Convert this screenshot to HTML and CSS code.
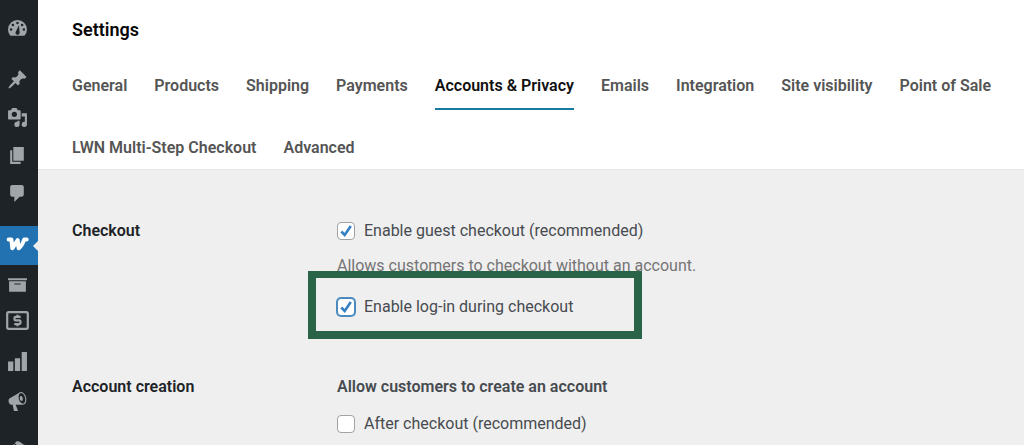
FILE: index.html
```html
<!DOCTYPE html>
<html lang="en">
<head>
<meta charset="utf-8">
<title>Settings</title>
<link rel="stylesheet" href="styles.css">
</head>
<body>
<div class="app">
  <nav class="sidebar" aria-label="Admin menu">
    <div class="menu-group menu-group-top">
      <a class="menu-item" href="#" aria-label="Dashboard"><svg class="icon" viewBox="0 0 20 20"><path fill-rule="evenodd" d="M3.400 17h13.200A9 9 0 0 0 19 11a9 9 0 0 0-18 0C1 13.500 1.900 15.500 3.400 17zM10 3.500a1.200 1.200 0 1 1 0 2.400A1.200 1.200 0 0 1 10 3.500zM5.600 5.400a1.200 1.200 0 1 1 0 2.400 1.200 1.200 0 0 1 0-2.400zM14.400 5.400a1.200 1.200 0 1 1 0 2.400 1.200 1.200 0 0 1 0-2.400zM3.900 9.800a1.200 1.200 0 1 1 0 2.400 1.200 1.200 0 0 1 0-2.400zM16.100 9.800a1.200 1.200 0 1 1 0 2.400 1.200 1.200 0 0 1 0-2.400zM11.400 7l.6 6.500a2 2 0 1 1-3.400-.9z"/></svg></a>
    </div>
    <div class="menu-group menu-group-content">
      <a class="menu-item" href="#" aria-label="Posts"><svg class="icon" viewBox="0 0 20 20"><path d="M10.440 3.020l1.820-1.820 6.360 6.350-1.830 1.820c-1.050-.68-2.480-.57-3.410.36l-.75.75c-.92.93-1.040 2.350-.35 3.410l-1.830 1.820-2.410-2.410-2.800 2.790c-.42.42-3.380 2.710-3.800 2.290s1.860-3.390 2.280-3.810l2.790-2.790L4.100 9.360l1.830-1.820c1.050.69 2.480.57 3.400-.36l.75-.75c.93-.92 1.050-2.350.36-3.410z"/></svg></a>
      <a class="menu-item" href="#" aria-label="Media"><svg class="icon" viewBox="0 0 20 20"><path fill-rule="evenodd" d="M13 11V4c0-.55-.45-1-1-1h-1.670L9 1H5L3.670 3H2c-.55 0-1 .45-1 1v7c0 .55.45 1 1 1h10c.55 0 1-.45 1-1zM7 4.500a2.500 2.500 0 1 1 0 5 2.500 2.500 0 0 1 0-5zM14 6h5v10.500a2.500 2.500 0 1 1-2-2.450V9h-3V6zm-4 8.050V13h2v3.500a2.500 2.500 0 1 1-2-2.450z"/></svg></a>
      <a class="menu-item" href="#" aria-label="Pages"><svg class="icon" viewBox="0 0 20 20"><path d="M6 15V2h10v13H6zm-1 1h8v2H3V5h2v11z"/></svg></a>
      <a class="menu-item" href="#" aria-label="Comments"><svg class="icon" viewBox="0 0 20 20"><path d="M5 2h9c1.100 0 2 .9 2 2v7c0 1.100-.9 2-2 2h-2l-5 5v-5H5c-1.100 0-2-.9-2-2V4c0-1.100.9-2 2-2z"/></svg></a>
    </div>
    <div class="menu-group menu-group-store">
      <a class="menu-item menu-item-current" href="#" aria-label="WooCommerce" aria-current="page"><svg class="icon icon-woo" viewBox="0 0 23 14"><path fill="none" stroke="#fff" stroke-width="4" stroke-linecap="round" stroke-linejoin="round" d="M2.600 2.400H5.400L6.300 11.300 11.700 3.200 12.600 11.300C15.800 9.500 17 6 18.300 2.400H20.700"/></svg></a>
      <a class="menu-item" href="#" aria-label="Products"><svg class="icon" viewBox="0 0 20 20"><path d="M19 4v2H1V4h18zM2 7h16v10H2V7zm11 3V9H7v1h6z"/></svg></a>
      <a class="menu-item" href="#" aria-label="Payments"><svg class="icon icon-money" viewBox="0 0 23 19"><rect x="1.200" y="1.200" width="20.600" height="16.600" rx="1.500" fill="none" stroke="currentColor" stroke-width="2.200"/><path fill="none" stroke="currentColor" stroke-width="2.200" d="M14.700 5.900H9.800Q8.500 5.900 8.500 7.100V8.200Q8.500 9.400 9.800 9.400H13.200Q14.500 9.400 14.500 10.600V11.800Q14.500 13.100 13.200 13.100H8.300M11.500 3.700V6M11.500 13V15.300"/></svg></a>
      <a class="menu-item" href="#" aria-label="Analytics"><svg class="icon" viewBox="0 0 20 20"><path d="M19 18V0h-5v18h5zm-6.500 0V6h-5v12h5zM6 18V9H1v9h5z"/></svg></a>
      <a class="menu-item" href="#" aria-label="Marketing"><svg class="icon" viewBox="0 0 20 20"><path fill-rule="evenodd" d="M18.150 5.940c.46 1.620.38 3.220-.02 4.480-.42 1.280-1.260 2.180-2.300 2.480-.16.06-.26.06-.4.06-.06.02-.12.02-.18.02-.06.02-.14.02-.22.02h-6.800l2.220 5.500c.02.14-.06.26-.14.34-.08.1-.24.16-.34.16H6.950c-.1 0-.26-.06-.34-.16-.08-.08-.16-.2-.14-.34l-1-5.500H4.250l-.02-.02c-.5.06-1.080-.18-1.540-.62s-.88-1.080-1.060-1.880c-.24-.8-.2-1.560-.02-2.200.18-.62.58-1.080 1.060-1.300l.02-.02 9-5.400c.1-.06.18-.1.24-.16.06-.04.14-.08.24-.12.16-.08.28-.12.5-.18 1.040-.3 2.240.1 3.220.98s1.840 2.240 2.260 3.860zm-2.580 5.980h-.02c.4-.1.74-.34 1.040-.7.58-.7.86-1.760.86-3.040 0-.64-.1-1.300-.28-1.980-.34-1.360-1.020-2.500-1.780-3.240s-1.680-1.100-2.460-.88c-.82.22-1.400.96-1.700 2-.32 1.040-.28 2.360.06 3.720.38 1.360 1 2.500 1.800 3.240.78.74 1.620 1.100 2.480.88zm-2.540-7.080c.22-.04.42-.02.62.04.38.16.76.48 1.020 1s.42 1.200.42 1.780c0 .3-.04.56-.12.8-.18.48-.44.84-.86.94-.34.1-.8-.06-1.140-.4s-.64-.86-.78-1.500c-.18-.62-.12-1.240.02-1.720s.48-.84.82-.94z"/></svg></a>
    </div>
    <div class="menu-group menu-group-site">
      <a class="menu-item" href="#" aria-label="Appearance"><svg class="icon" viewBox="0 0 20 20"><path d="M14.480 11.060L7.410 3.990l1.500-1.500c.5-.56 2.300-.47 3.510.32 1.210.8 1.430 1.280 2.910 2.100 1.180.64 2.450 1.260 4.450.85zm-.71.71L6.700 4.700 4.930 6.470c-.39.39-.39 1.020 0 1.410l1.060 1.060c.39.39.39 1.030 0 1.420-.6.6-1.430 1.110-2.210 1.690-.35.26-.7.53-1.010.84C1.430 14.230.4 16.080 1.400 17.070c.99 1 2.840-.03 4.180-1.360.31-.31.58-.66.85-1.020.57-.78 1.080-1.610 1.690-2.210.39-.39 1.020-.39 1.410 0l1.060 1.060c.39.39 1.020.39 1.410 0z"/></svg></a>
    </div>
  </nav>

  <main class="main">
    <header class="header">
      <h1 class="title">Settings</h1>
      <nav class="tabs" aria-label="Settings sections">
        <a class="tab" href="#">General</a>
        <a class="tab" href="#">Products</a>
        <a class="tab" href="#">Shipping</a>
        <a class="tab" href="#">Payments</a>
        <a class="tab tab-active" href="#" aria-current="page">Accounts &amp; Privacy</a>
        <a class="tab" href="#">Emails</a>
        <a class="tab" href="#">Integration</a>
        <a class="tab" href="#">Site visibility</a>
        <a class="tab" href="#">Point of Sale</a>
        <a class="tab" href="#">LWN Multi-Step Checkout</a>
        <a class="tab" href="#">Advanced</a>
      </nav>
    </header>

    <form class="settings">
      <section class="row">
        <h2 class="row-title">Checkout</h2>
        <div class="fields">
          <div class="option">
            <input class="checkbox" type="checkbox" id="guest" checked>
            <label for="guest">Enable guest checkout (recommended)</label>
          </div>
          <p class="description">Allows customers to checkout without an account.</p>
          <div class="option option-highlighted">
            <input class="checkbox checkbox-focused" type="checkbox" id="login" checked>
            <label for="login">Enable log-in during checkout</label>
          </div>
        </div>
      </section>
      <section class="row">
        <h2 class="row-title">Account creation</h2>
        <div class="fields">
          <h3 class="fields-title">Allow customers to create an account</h3>
          <div class="option">
            <input class="checkbox" type="checkbox" id="after">
            <label for="after">After checkout (recommended)</label>
          </div>
        </div>
      </section>
    </form>
  </main>
</div>
</body>
</html>
```
FILE: styles.css
```css
* { box-sizing: border-box; }

body {
  margin: 0;
  background: #efefef;
  color: #474b50;
  font-family: Roboto, "Liberation Sans", sans-serif;
  font-size: 16px;
  line-height: 24px;
}

h1, h2, h3, p { margin: 0; }

.app {
  display: flex;
  height: 100vh;
  overflow: hidden;
}

.sidebar {
  flex: none;
  width: 38px;
  padding-top: 9px;
  background: #1d2327;
}

.menu-group { display: grid; }
.menu-group-top { margin-bottom: 13px; }
.menu-group-content { margin-bottom: 14px; }
.menu-group-store { margin-bottom: 9px; }

.menu-item {
  display: flex;
  align-items: center;
  justify-content: center;
  height: 38px;
  padding-right: 4px;
  color: #a0a5aa;
}

.menu-group-content .menu-item { padding-top: 1px; }
.menu-group-store .menu-item { height: 39px; }

.menu-item-current {
  position: relative;
  background: #2271b1;
}

.menu-item-current::after {
  content: "";
  position: absolute;
  right: 0;
  top: 50%;
  margin-top: -5px;
  border: 5px solid transparent;
  border-left-width: 0;
  border-right-color: #efefef;
}

.icon {
  display: block;
  flex: none;
  width: 21px;
  height: 21px;
  fill: currentColor;
}

.icon-woo { width: 23px; height: 14px; margin-bottom: 4px; }
.icon-money { width: 23px; height: 19px; margin-bottom: 6px; }

.main {
  flex: 1;
  min-width: 0;
}

.header {
  padding: 18px 24px 9px 34px;
  background: #fff;
  border-bottom: 1px solid #e4e4e4;
}

.title {
  color: #070707;
  font-size: 18px;
  font-weight: 600;
  line-height: 24px;
}

.tabs {
  display: flex;
  flex-wrap: wrap;
  gap: 38px 27px;
  margin-top: 32px;
}

.tab {
  position: relative;
  color: #555;
  font-weight: 600;
  text-decoration: none;
}

.tab-active { color: #111; }

.tab-active::after {
  content: "";
  position: absolute;
  inset: auto 0 -12px;
  height: 2px;
  background: #187aa2;
}

.settings {
  display: grid;
  gap: 56px;
  padding: 49px 24px 24px 34px;
}

.row {
  display: grid;
  grid-template-columns: 265px 1fr;
}

.row-title {
  color: #1d2327;
  font-size: 16px;
  font-weight: 600;
  line-height: 24px;
}

.fields-title {
  margin-bottom: 13px;
  font-size: 16px;
  font-weight: 600;
  line-height: 24px;
}

.option {
  display: flex;
  align-items: center;
  gap: 9px;
  width: max-content;
}

.description {
  margin: 11px 0 17px;
  color: #757575;
}

.checkbox {
  appearance: none;
  flex: none;
  width: 18px;
  height: 18px;
  margin: 0;
  border: 1px solid #a0a2a5;
  border-radius: 4px;
  background: #fff center / 100% no-repeat;
}

.checkbox:checked {
  background-image: url("data:image/svg+xml,%3Csvg xmlns='http://www.w3.org/2000/svg' viewBox='0 0 16 16'%3E%3Cpath d='M3.300 8.500 6.700 12 12.800 3' fill='none' stroke='%233582c4' stroke-width='2.600'/%3E%3C/svg%3E");
}

.checkbox-focused {
  border-color: #4a8abf;
  box-shadow: 0 0 0 1px #4a8abf;
}

.option-highlighted { position: relative; }

.option-highlighted::before {
  content: "";
  position: absolute;
  inset: -24px -69px -20px -29px;
  border: 8px solid #296448;
  border-width: 7px 8px 8px;
  pointer-events: none;
}
```
